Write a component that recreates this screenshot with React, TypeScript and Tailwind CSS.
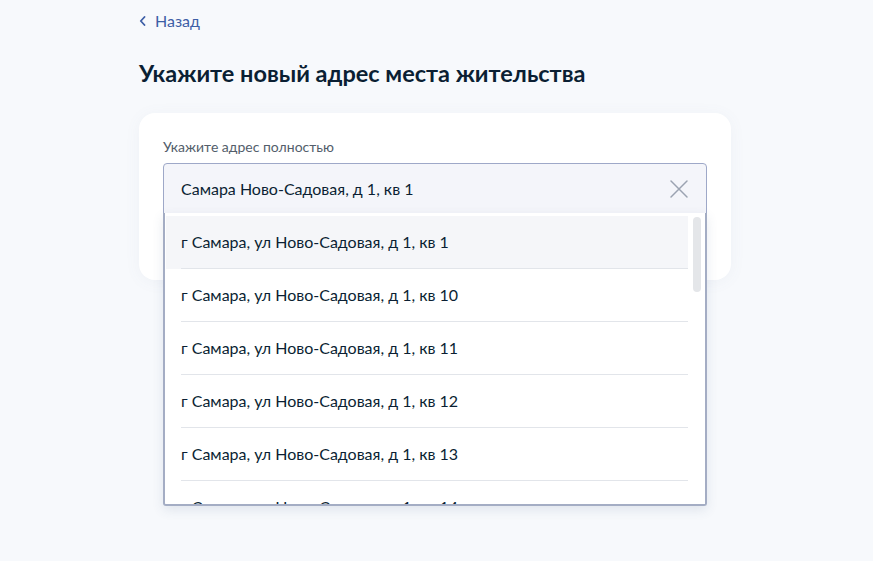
import React from "react";

const items = [
  "г Самара, ул Ново-Садовая, д 1, кв 1",
  "г Самара, ул Ново-Садовая, д 1, кв 10",
  "г Самара, ул Ново-Садовая, д 1, кв 11",
  "г Самара, ул Ново-Садовая, д 1, кв 12",
  "г Самара, ул Ново-Садовая, д 1, кв 13",
  "г Самара, ул Ново-Садовая, д 1, кв 14",
];

export default function App() {
  return (
    <div
      className="min-h-[561px] bg-[#f7f9fc] text-[#0b1f33]"
      style={{ fontFamily: "Lato, 'Noto Sans', sans-serif" }}
    >
      <div className="pl-[139px] pt-[11px]">
        <a className="flex items-center gap-[9px] text-[16px] leading-[20px] text-[#3d5ea6] w-fit cursor-pointer">
          <svg width="7" height="10" viewBox="0 0 7 10" fill="none">
            <path d="M5.5 1 L1.8 5 L5.5 9" stroke="#3d5ea6" strokeWidth="1.8" strokeLinecap="round" strokeLinejoin="round" />
          </svg>
          <span>Назад</span>
        </a>
        <h1 className="mt-[27px] text-[23.5px] leading-[30px] font-bold">
          Укажите новый адрес места жительства
        </h1>
        <div className="mt-[25px] w-[592px] h-[167px] bg-white rounded-[16px] shadow-[0_2px_16px_rgba(100,120,160,0.06)] pt-[26px] pl-[24px] pr-[24px]">
          <div className="text-[14px] leading-[16px] text-[#535e6b]">Укажите адрес полностью</div>
          <div className="relative mt-[8px]">
            <div className="flex items-center h-[51px] border border-[#9ea8c8] bg-[#f4f5fa] rounded-t-[4px] pl-[17px] pr-[17px]">
              <span className="flex-1 text-[16px] leading-[20px]">Самара Ново-Садовая, д 1, кв 1</span>
              <svg width="20" height="20" viewBox="0 0 20 20" fill="none">
                <path d="M2 2 L18 18 M18 2 L2 18" stroke="#9ba3b1" strokeWidth="1.5" strokeLinecap="round" />
              </svg>
            </div>
            <div className="absolute left-0 right-0 top-[50px] h-[293px] bg-white border-2 border-t-0 border-[#a4adc4] rounded-b-[3px] shadow-[0_4px_12px_rgba(60,80,120,0.12)] overflow-hidden">
              <div className="pt-[3px] pl-[1px] pr-[17px]">
                {items.map((t, i) => (
                  <div key={i} className={`flex h-[53px] ${i === 0 ? "bg-[#f5f6f9]" : ""}`}>
                    <div className="ml-[15px] flex-1 flex items-center border-b border-[#e2e5ea] text-[16px] leading-[20px]">
                      {t}
                    </div>
                  </div>
                ))}
              </div>
              <div className="absolute right-[4px] top-[4px] w-[8px] h-[75px] rounded-full bg-[#e4e6e9]" />
            </div>
          </div>
        </div>
      </div>
    </div>
  );
}
